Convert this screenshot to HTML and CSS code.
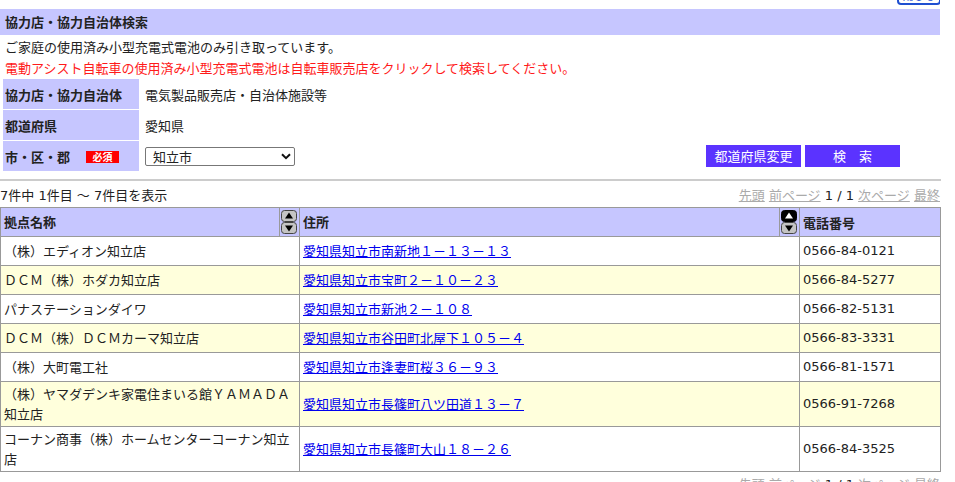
FILE: index.html
```html
<!DOCTYPE html>
<html lang="ja">
<head>
<meta charset="utf-8">
<title>協力店・協力自治体検索</title>
<link rel="stylesheet" href="styles.css">
</head>
<body>
<div class="page">
  <div class="topbar"><span class="close-btn">閉じる</span></div>
  <div class="title">協力店・協力自治体検索</div>
  <div class="notes">
    <div>ご家庭の使用済み小型充電式電池のみ引き取っています。</div>
    <div class="red">電動アシスト自転車の使用済み小型充電式電池は自転車販売店をクリックして検索してください。</div>
  </div>
  <table class="form">
    <tr>
      <th class="label">協力店・協力自治体</th>
      <td class="value">電気製品販売店・自治体施設等</td>
    </tr>
    <tr>
      <th class="label">都道府県</th>
      <td class="value">愛知県</td>
    </tr>
    <tr>
      <th class="label">市・区・郡<span class="req">必須</span></th>
      <td class="value">
        <div class="value-row">
          <span class="select-wrap">
            <select class="city"><option>知立市</option></select>
            <svg class="chev" width="10" height="7" viewBox="0 0 10 7"><path d="M1 1.2 L5 5.2 L9 1.2" fill="none" stroke="#111" stroke-width="2"/></svg>
          </span>
          <span class="buttons">
            <span class="btn btn-pref">都道府県変更</span>
            <span class="btn btn-search">検　索</span>
          </span>
        </div>
      </td>
    </tr>
  </table>
  <div class="rule"></div>
  <div class="info">
    <span>7件中 1件目 〜 7件目を表示</span>
    <span class="pager"><a>先頭</a> <a>前ページ</a> <span class="cur">1 / 1</span> <a>次ページ</a> <a>最終</a></span>
  </div>
  <table class="list">
    <colgroup><col class="c1"><col class="c2"><col class="c3"></colgroup>
    <thead>
      <tr>
        <th><div class="th-in"><span class="th-text">拠点名称</span><span class="sort"><svg width="16" height="24" viewBox="0 0 16 24"><rect x="0.5" y="0.5" width="15" height="11" rx="3" fill="#c4c4c4" stroke="#444"/><path d="M8 2.5 L12 8.5 L4 8.5 Z" fill="#000"/><rect x="0.5" y="12.5" width="15" height="11" rx="3" fill="#c4c4c4" stroke="#444"/><path d="M4 15.5 L12 15.5 L8 21.5 Z" fill="#000"/></svg></span></div></th>
        <th><div class="th-in"><span class="th-text">住所</span><span class="sort"><svg width="16" height="24" viewBox="0 0 16 24"><rect x="0.5" y="0.5" width="15" height="11" rx="3" fill="#000" stroke="#000"/><path d="M8 2.5 L12 8.5 L4 8.5 Z" fill="#fff"/><rect x="0.5" y="12.5" width="15" height="11" rx="3" fill="#c4c4c4" stroke="#444"/><path d="M4 15.5 L12 15.5 L8 21.5 Z" fill="#000"/></svg></span></div></th>
        <th class="th-plain">電話番号</th>
      </tr>
    </thead>
    <tbody>
      <tr><td>（株）エディオン知立店</td><td><a>愛知県知立市南新地１－１３－１３</a></td><td>0566-84-0121</td></tr>
      <tr class="alt"><td>ＤＣＭ（株）ホダカ知立店</td><td><a>愛知県知立市宝町２－１０－２３</a></td><td>0566-84-5277</td></tr>
      <tr><td>パナステーションダイワ</td><td><a>愛知県知立市新池２－１０８</a></td><td>0566-82-5131</td></tr>
      <tr class="alt"><td>ＤＣＭ（株）ＤＣＭカーマ知立店</td><td><a>愛知県知立市谷田町北屋下１０５－４</a></td><td>0566-83-3331</td></tr>
      <tr><td>（株）大町電工社</td><td><a>愛知県知立市逢妻町桜３６－９３</a></td><td>0566-81-1571</td></tr>
      <tr class="alt"><td>（株）ヤマダデンキ家電住まいる館ＹＡＭＡＤＡ知立店</td><td><a>愛知県知立市長篠町八ツ田道１３－７</a></td><td>0566-91-7268</td></tr>
      <tr><td>コーナン商事（株）ホームセンターコーナン知立店</td><td><a>愛知県知立市長篠町大山１８－２６</a></td><td>0566-84-3525</td></tr>
    </tbody>
  </table>
  <div class="info bottom">
    <span></span>
    <span class="pager"><a>先頭</a> <a>前ページ</a> <span class="cur">1 / 1</span> <a>次ページ</a> <a>最終</a></span>
  </div>
</div>
</body>
</html>
```

FILE: styles.css
```css
html, body {
  margin: 0;
  padding: 0;
  background: #fff;
}
body {
  font-family: "Noto Sans CJK JP", "Noto Sans", sans-serif;
  font-size: 13px;
  color: #222;
}
.page {
  width: 940px;
}
.topbar {
  height: 9px;
  display: flex;
  justify-content: flex-end;
  overflow: hidden;
}
.close-btn {
  display: block;
  box-sizing: border-box;
  width: 44px;
  height: 20px;
  margin-top: -15px;
  margin-right: -1px;
  border: 2px solid #1f4fd1;
  border-radius: 4px;
  background: #fff;
  color: #1f4fd1;
  font-size: 11px;
  line-height: 16px;
  text-align: center;
}
.title {
  background: #c6c6ff;
  height: 26px;
  line-height: 26px;
  padding-left: 5px;
  font-weight: bold;
}
.notes {
  padding: 1px 5px 0;
  line-height: 21px;
}
.red {
  color: #ff1a1a;
}
.form {
  border-collapse: separate;
  border-spacing: 2px 1px;
  margin-left: 1px;
  width: 901px;
}
.form .label {
  width: 134px;
  background: #c6c6ff;
  text-align: left;
  font-weight: bold;
  height: 30px;
  padding: 0 0 0 2px;
  white-space: nowrap;
}
.form .value {
  padding: 0 0 0 4px;
  height: 30px;
}
.req {
  display: inline-block;
  margin-left: 16px;
  width: 33px;
  height: 12px;
  line-height: 12px;
  background: #f00;
  color: #fff;
  font-size: 10px;
  font-weight: bold;
  text-align: center;
  vertical-align: 1px;
}
.value-row {
  display: flex;
  align-items: center;
}
.select-wrap {
  position: relative;
  display: inline-block;
  height: 19px;
}
.city {
  -webkit-appearance: none;
  appearance: none;
  box-sizing: border-box;
  width: 150px;
  height: 19px;
  border: 1px solid #777;
  border-radius: 2px;
  background: #fff;
  font-family: "Noto Sans CJK JP", sans-serif;
  font-size: 13px;
  line-height: 17px;
  padding: 0 0 0 7px;
  color: #222;
  display: block;
}
.chev {
  position: absolute;
  right: 4px;
  top: 6px;
}
.buttons {
  margin-left: auto;
  display: flex;
  gap: 4px;
}
.btn {
  display: block;
  height: 22px;
  line-height: 22px;
  background: #5b33ff;
  color: #fff;
  text-align: center;
  font-size: 13px;
}
.btn-pref {
  width: 95px;
}
.btn-search {
  width: 95px;
}
.rule {
  height: 2px;
  background: #cccccc;
  margin-top: 7px;
  width: 941px;
}
.info {
  display: flex;
  justify-content: space-between;
  padding: 5px 0 1px;
  line-height: 20px;
  font-family: "DejaVu Sans", "Noto Sans CJK JP", sans-serif;
  font-size: 13px;
}
.pager a {
  color: #aaa;
  text-decoration: underline;
}
.pager .cur {
  color: #222;
}
.bottom {
  padding-top: 3px;
}
.list {
  border-collapse: collapse;
  table-layout: fixed;
  width: 940px;
  border: 1px solid #999;
}
.list col.c1 { width: 299px; }
.list col.c2 { width: 500px; }
.list col.c3 { width: 141px; }
.list th {
  background: #c6c6ff;
  text-align: left;
  font-weight: bold;
  border: 1px solid #999;
  height: 28px;
  padding: 0;
}
.th-plain {
  padding-left: 3px !important;
}
.th-in {
  display: flex;
  align-items: stretch;
  height: 28px;
}
.th-text {
  flex: 1;
  padding-left: 3px;
  line-height: 28px;
}
.sort {
  border-left: 1px solid #999;
  padding: 0 2px 0 1px;
  display: flex;
  align-items: center;
}
.sort svg {
  display: block;
}
.list td {
  border: 1px solid #999;
  padding: 2px 3px;
  line-height: 20px;
  height: 24px;
  vertical-align: middle;
}
.list tr td:nth-child(3) {
  font-family: "DejaVu Sans", "Noto Sans CJK JP", sans-serif;
  font-size: 13px;
}
.list tr.alt td {
  background: #ffffdc;
}
.list td a {
  color: #0000ee;
  text-decoration: underline;
}
```
